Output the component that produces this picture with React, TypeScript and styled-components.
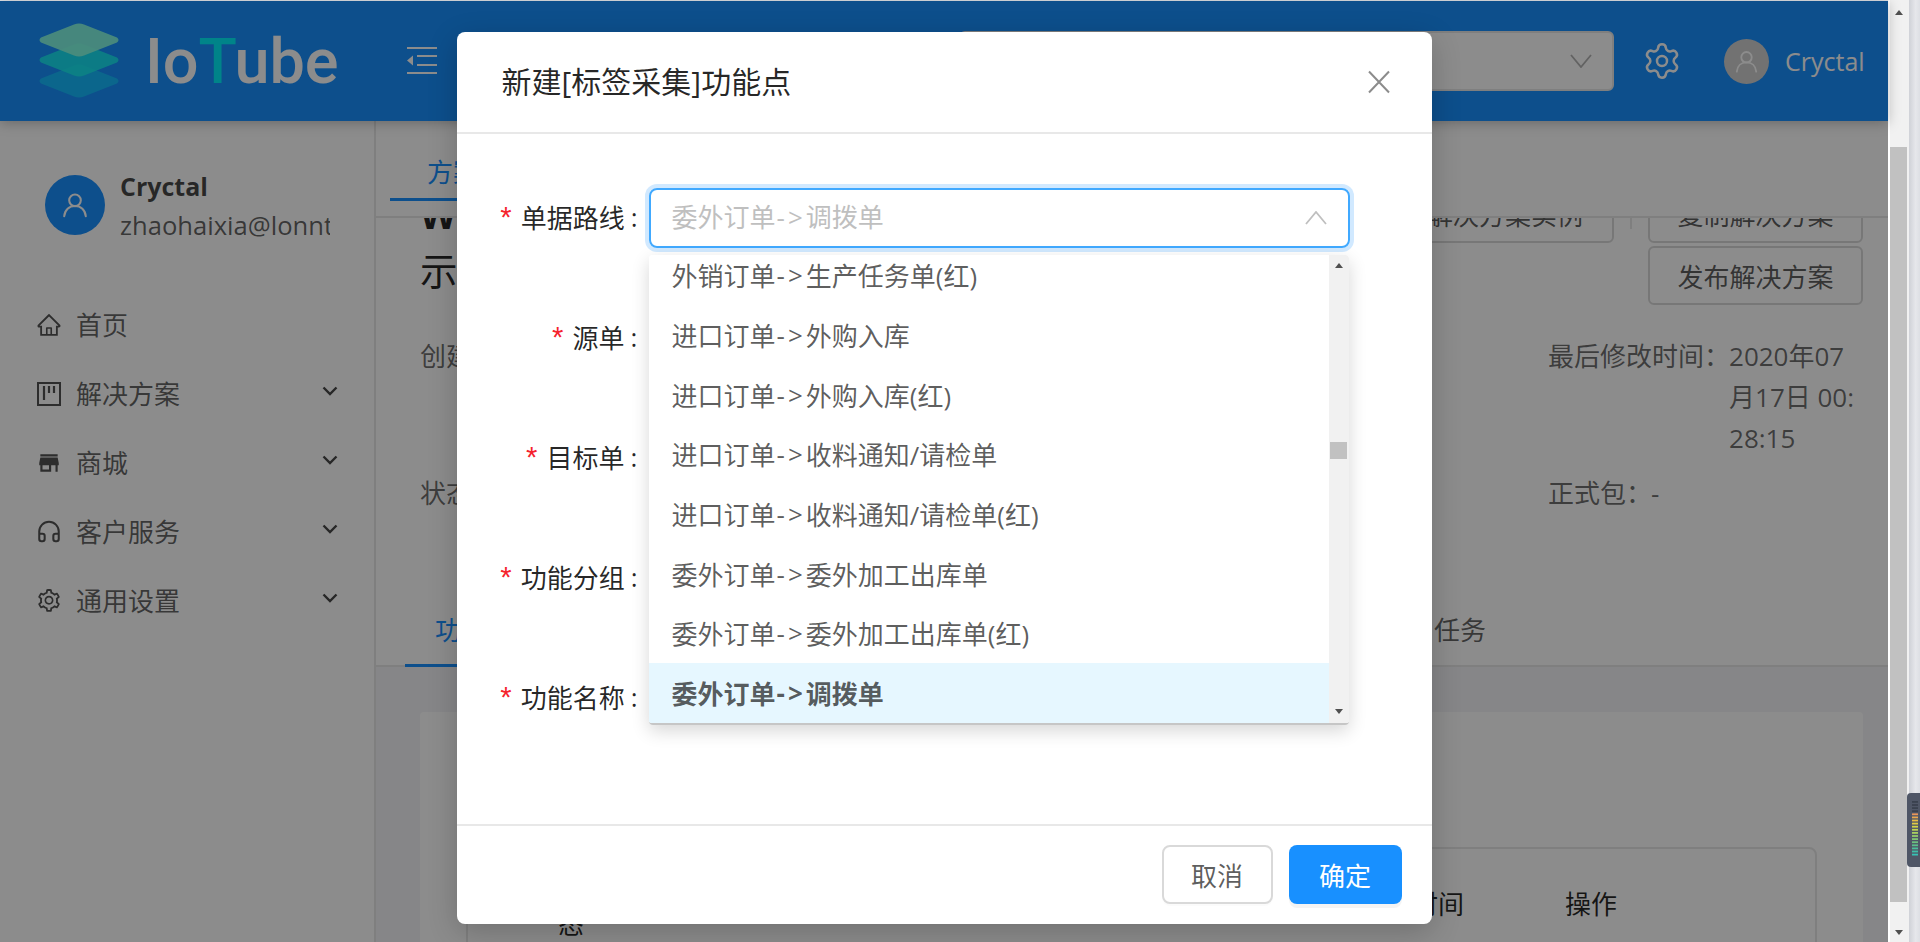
import React from 'react';
import styled, { createGlobalStyle } from 'styled-components';
import { Settings, Headphones } from 'lucide-react';
import { AiOutlineHome, AiOutlineSetting } from 'react-icons/ai';
import { MdStore } from 'react-icons/md';

const Global = createGlobalStyle`
  html, body { margin: 0; padding: 0; height: 100%; overflow: hidden; background: #fff; }
  * { box-sizing: border-box; }
  body { font-family: "Open Sans", "Noto Sans CJK SC", sans-serif; font-size: 26px; }
`;

const Screen = styled.div`
  width: 1920px; height: 942px; display: flex; overflow: hidden;
`;
const Viewport = styled.div`
  position: relative; width: 1888px; height: 942px; display: flex; flex-direction: column;
  border-top: 1px solid #dfe1e5; background: #fff;
`;
const Header = styled.header`
  position: relative; z-index: 2; height: 120px; flex: none; background: #1890ff; display: flex; align-items: center;
  padding: 0 25px 0 38px; box-shadow: 0 2px 12px rgba(0,0,0,.25); color: #fff;
`;
const LogoText = styled.div`
  font-family: Roboto, sans-serif; font-weight: 500; font-size: 63px; line-height: 1; letter-spacing: 0;
  margin-left: 25px; color: #fff;
  span { color: #00f0f9; }
`;
const FoldButton = styled.svg`
  width: 30px; height: 28px; margin-left: 68px; flex: none;
`;
const HeaderSelect = styled.div`
  margin-left: auto; width: 655px; height: 60px; background: #fff; border: 2px solid #e8e8e8; border-radius: 6px;
  display: flex; align-items: center; justify-content: flex-end; padding-right: 20px; color: #bfbfbf;
`;
const HeaderGear = styled.div`
  margin-left: 28px; display: flex; color: #fff;
`;
const HeaderAvatar = styled.div`
  width: 45px; height: 45px; border-radius: 50%; background: #d0d0d0; margin-left: 42px; display: flex;
  align-items: center; justify-content: center; color: #fff;
`;
const HeaderName = styled.div`
  margin-left: 16px; font-size: 25px; color: #fff; width: 78px; white-space: nowrap;
`;
const Body = styled.div`
  flex: 1; display: flex; min-height: 0;
`;
const Sidebar = styled.aside`
  width: 376px; flex: none; border-right: 2px solid #e8e8e8; padding-top: 54px;
`;
const Profile = styled.div`
  display: flex; gap: 15px; padding-left: 45px; height: 60px; align-items: center;
`;
const ProfileAvatar = styled.div`
  width: 60px; height: 60px; border-radius: 50%; background: #1890ff; display: flex; align-items: center; justify-content: center; flex: none;
`;
const ProfileInfo = styled.div`
  width: 210px; overflow: hidden; white-space: nowrap; color: rgba(0,0,0,.62);
`;
const ProfileName = styled.div`
  font-weight: 700; font-size: 25px; line-height: 36px; padding-top: 3px; color: rgba(0,0,0,.72);
`;
const ProfileMail = styled.div`
  font-size: 25.6px; line-height: 40px; margin-top: 2px;
`;
const Nav = styled.nav`
  margin-top: 55px;
`;
const NavItem = styled.div`
  height: 69px; display: flex; align-items: center; padding: 0 36px; color: rgba(0,0,0,.62);
`;
const NavIcon = styled.span`
  width: 26px; height: 26px; display: flex; align-items: center; justify-content: center; flex: none; color: rgba(0,0,0,.68);
`;
const NavLabel = styled.span`
  margin-left: 14px; flex: 1; line-height: 40px;
`;
const NavChevron = styled.svg`
  width: 16px; height: 10px; flex: none; margin-top: -6px; margin-right: 0;
`;
const Main = styled.main`
  flex: 1; min-width: 0; display: flex; flex-direction: column; overflow: hidden;
`;
const TopTabs = styled.div`
  height: 97px; flex: none; border-bottom: 2px solid #e8e8e8; padding-left: 14px; background: #fff; position: relative; z-index: 1;
`;
const TopTab = styled.div`
  height: 80px; width: 200px; padding-left: 37px; line-height: 102px; color: #1890ff; border-bottom: 3px solid #1890ff; white-space: nowrap;
`;
const Scroller = styled.div`
  flex: 1; min-height: 0; overflow: hidden;
`;
const ScrollInner = styled.div`
  margin-top: -58px;
`;
const Head = styled.div`
  height: 176px; padding: 24px 25px 0 44px; display: flex; justify-content: space-between;
`;
const Titles = styled.div`
  padding-top: 3px; font-size: 37.5px; line-height: 56px; color: rgba(0,0,0,.85);
  b { display: block; }
`;
const Actions = styled.div`
  width: 530px; display: flex; flex-wrap: wrap; justify-content: flex-end; align-items: flex-start; align-content: flex-start; row-gap: 3px;
`;
const GhostButton = styled.div`
  height: 59px; width: ${p => p.$w}px; border: 2px solid #d9d9d9; border-radius: 6px; display: flex; align-items: center; justify-content: center; color: rgba(0,0,0,.65); white-space: nowrap;
`;
const ActionDivider = styled.div`
  width: 2px; height: 45px; margin: 0 16px; background: #e8e8e8;
`;
const Meta = styled.div`
  padding: 0 25px 0 44px; display: grid; grid-template-columns: 1fr 315px; row-gap: 14px; line-height: 41px; color: rgba(0,0,0,.58);
`;
const MetaItem = styled.div`
  display: flex;
`;
const MetaLabel = styled.span`
  flex: none;
`;
const MetaValue = styled.span`
  margin-left: ${p => p.$gap ?? 10}px; width: 132px; word-break: break-all;
`;
const SectionTabs = styled.div`
  margin-top: 81px; height: 72px; padding-left: 29px; display: flex; border-bottom: 2px solid #e8e8e8;
`;
const SectionTab = styled.div`
  height: 72px; padding: 0 30px; line-height: 70px; white-space: nowrap;
  color: ${p => (p.$active ? '#1890ff' : 'rgba(0,0,0,.62)')};
  border-bottom: 3px solid ${p => (p.$active ? '#1890ff' : 'transparent')};
  margin-left: ${p => p.$offset ?? 0}px;
`;
const Panel = styled.div`
  background: #f5f5f7; padding: 45px 25px 0 44px; height: 400px;
`;
const Card = styled.div`
  background: #fff; border-radius: 4px; padding: 135px 46px 0; height: 400px;
`;
const TableBox = styled.div`
  border: 2px solid #e8e8e8; border-radius: 8px; height: 300px;
`;
const TableHead = styled.div`
  height: 110px; display: flex; align-items: center; padding-left: 90px; line-height: 41px; color: rgba(0,0,0,.85);
`;
const StatusCell = styled.div`
  width: 26px; word-break: break-all;
`;
const TimeCell = styled.div`
  margin-left: 750px; width: 130px; text-align: right; white-space: nowrap; padding-right: 0;
`;
const ActionCell = styled.div`
  margin-left: 101px;
`;

const Mask = styled.div`
  position: absolute; inset: 0; z-index: 5; background: rgba(0,0,0,.45); display: flex; justify-content: center; padding-top: 31px;
`;
const Modal = styled.div`
  width: 975px; height: 892px; background: #fff; border-radius: 8px; box-shadow: 0 8px 30px rgba(0,0,0,.2); display: flex; flex-direction: column;
`;
const ModalHead = styled.div`
  height: 102px; flex: none; border-bottom: 2px solid #e8e8e8; padding: 0 41px 0 45px; display: flex; align-items: center; justify-content: space-between;
`;
const ModalTitle = styled.div`
  font-size: 30px; color: rgba(0,0,0,.85); line-height: 40px;
`;
const CloseIcon = styled.svg`
  width: 24px; height: 24px; flex: none;
`;
const ModalBody = styled.div`
  position: relative; flex: 1; padding: 54px 0 0 45px; display: flex; flex-direction: column; gap: 60px;
`;
const FormRow = styled.div`
  height: 60px; display: flex; align-items: center;
`;
const FormLabel = styled.label`
  width: 136px; margin-right: 11px; flex: none; display: flex; justify-content: flex-end; align-items: center; color: rgba(0,0,0,.85); white-space: nowrap; margin-top: -2px;
`;
const Star = styled.span`
  color: #f5222d; font-family: "Liberation Mono", monospace; font-size: 29px; margin-right: 6px; line-height: 1; padding-top: 8px;
`;
const Colon = styled.span`
  margin-left: 6px; width: 7px;
`;
const SelectBox = styled.div`
  width: 701px; height: 60px; border: 2px solid #40a9ff; border-radius: 8px; box-shadow: 0 0 0 4px rgba(24,144,255,.2);
  display: flex; align-items: center; justify-content: space-between; padding: 0 21px 0 21px; color: #bfbfbf; line-height: 54px;
`;
const Placeholder = styled.span`
  margin-top: -2px;
`;
const Arrow = styled.span`
  letter-spacing: 3px; margin-left: 1px;
`;
const UpChevron = styled.svg`
  width: 22px; height: 14px; flex: none;
`;
const Dropdown = styled.div`
  position: absolute; left: 192px; top: 121px; width: 700px; height: 470px; background: #fff; display: flex;
  border-radius: 4px; overflow: hidden; border-bottom: 2px solid #c6c6c6;
`;
const DropShadow = styled.div`
  position: absolute; left: 192px; top: 121px; width: 700px; height: 470px; border-radius: 4px; box-shadow: 0 6px 18px rgba(0,0,0,.16);
`;
const Options = styled.div`
  flex: 1; min-width: 0; display: flex; flex-direction: column; justify-content: flex-end; overflow: hidden;
`;
const Option = styled.div`
  height: 59.7px; flex: none; padding-left: 23px; display: flex; align-items: center; white-space: nowrap;
  color: rgba(0,0,0,.65);
  background: ${p => (p.$selected ? '#e6f7ff' : '#fff')};
  font-weight: ${p => (p.$selected ? 700 : 400)};
`;
const InnerBar = styled.div`
  width: 20px; flex: none; background: #f1f1f1; position: relative; display: flex; flex-direction: column; align-items: center; padding-top: 8px;
`;
const ArrowUp = styled.div`
  width: 0; height: 0; border-left: 4px solid transparent; border-right: 4px solid transparent; border-bottom: 5px solid #505050; flex: none;
`;
const ArrowDown = styled.div`
  width: 0; height: 0; border-left: 4px solid transparent; border-right: 4px solid transparent; border-top: 5px solid #505050; flex: none;
`;
const InnerThumb = styled.div`
  width: 17px; height: 17px; background: #c1c1c1; margin-top: 174px; flex: none;
`;
const InnerDown = styled.div`
  margin-top: auto; padding-bottom: 9px;
`;
const ModalFoot = styled.div`
  height: 100px; flex: none; border-top: 2px solid #e8e8e8; padding: 19px 30px 0 0; display: flex; justify-content: flex-end; gap: 16px;
`;
const CancelBtn = styled.div`
  width: 111px; height: 59px; border: 2px solid #d9d9d9; border-radius: 8px; background: #fff; display: flex; align-items: center; justify-content: center; color: rgba(0,0,0,.65); box-shadow: 0 2px 0 rgba(0,0,0,.015);
`;
const OkBtn = styled.div`
  width: 113px; height: 59px; border-radius: 8px; background: #1890ff; display: flex; align-items: center; justify-content: center; color: #fff; box-shadow: 0 4px 0 rgba(0,0,0,.045);
`;

const PageBar = styled.div`
  width: 21px; height: 942px; flex: none; background: #f1f1f1; border-left: 2px solid #fff; display: flex; flex-direction: column; align-items: center; padding-top: 10px; padding-right: 2px;
`;
const PageThumb = styled.div`
  width: 17px; height: 755px; background: #c1c1c1; margin-top: 132px; flex: none;
`;
const PageDown = styled.div`
  margin-top: auto; padding-bottom: 7px;
`;
const SideStrip = styled.div`
  position: relative; flex: 1; height: 942px; background: linear-gradient(90deg, #cfd1d7, #e6e7eb 60%, #dddfe4);
`;
const Meter = styled.svg`
  position: absolute; left: -2px; top: 793px; width: 13px; height: 74px;
`;

const routes = [
  '外销订单->生产任务单(红)',
  '进口订单->外购入库',
  '进口订单->外购入库(红)',
  '进口订单->收料通知/请检单',
  '进口订单->收料通知/请检单(红)',
  '委外订单->委外加工出库单',
  '委外订单->委外加工出库单(红)',
];

const Route = ({ text }: { text: string }) => {
  const [a, b] = text.split('->');
  return <>{a}<Arrow>-&gt;</Arrow>{b}</>;
};

const UserGlyph = ({ size, color }: { size: number; color: string }) => (
  <svg width={size} height={size} viewBox="0 0 32 32" fill="none" stroke={color} strokeWidth="2.2" strokeLinecap="round">
    <circle cx="16" cy="11" r="6.2" />
    <path d="M4.5 28c.6-6.8 5.2-11 11.5-11s10.900 4.200 11.500 11" />
  </svg>
);

const Chevron = () => (
  <NavChevron viewBox="0 0 16 10" fill="none" stroke="rgba(0,0,0,.72)" strokeWidth="2.4">
    <path d="M1.500 1.500 8 8l6.500-6.500" />
  </NavChevron>
);

const meterColors = ['#3a414e','#3a414e','#3a414e','#3a414e','#e8965a','#eaa84e','#e8bc44','#e0cc44','#d2d448','#bed452','#a8d060','#94cb6a','#80c674','#6cc27f','#5cc08c','#4cc09a','#3fc0a8','#36c2b4'];

export default function App() {
  return (
    <Screen>
      <Global />
      <Viewport>
        <Header>
          <svg width="82" height="76" viewBox="0 0 82 76" style={{ flex: 'none' }}>
            <path d="M36 42.500 3 55.500q-3 2.500 0 5L36 73.500q5 2 10 0L79 60.500q3-2.500 0-5L46 42.500q-5-2-10 0Z" fill="#14c4ff" fillOpacity=".8" />
            <path d="M36 21.500 3 34.500q-3 2.500 0 5L36 52.500q5 2 10 0L79 39.500q3-2.500 0-5L46 21.500q-5-2-10 0Z" fill="#18eef0" fillOpacity=".85" />
            <path d="M36 1.500 3 14.500q-3 2.500 0 5L36 32.500q5 2 10 0L79 19.500q3-2.500 0-5L46 1.500q-5-2-10 0Z" fill="#8affe2" fillOpacity=".92" />
          </svg>
          <LogoText>Io<span>T</span>ube</LogoText>
          <FoldButton viewBox="0 0 30 28" fill="#fff">
            <rect x="0" y="0" width="30" height="2" />
            <rect x="10" y="8" width="20" height="2" />
            <rect x="10" y="17" width="20" height="2" />
            <rect x="0" y="25" width="30" height="2" />
            <path d="M6 8.500v10L0 13.500Z" />
          </FoldButton>
          <HeaderSelect>
            <svg width="22" height="14" viewBox="0 0 22 14" fill="none" stroke="rgba(0,0,0,.3)" strokeWidth="1.800"><path d="M1 1l10 12L21 1" /></svg>
          </HeaderSelect>
          <HeaderGear><Settings size={40} strokeWidth={1.5} /></HeaderGear>
          <HeaderAvatar><UserGlyph size={27} color="#fff" /></HeaderAvatar>
          <HeaderName>Cryctal</HeaderName>
        </Header>
        <Body>
          <Sidebar>
            <Profile>
              <ProfileAvatar><UserGlyph size={30} color="#fff" /></ProfileAvatar>
              <ProfileInfo>
                <ProfileName>Cryctal</ProfileName>
                <ProfileMail>zhaohaixia@lonnto.com</ProfileMail>
              </ProfileInfo>
            </Profile>
            <Nav>
              <NavItem><NavIcon><AiOutlineHome size={32} /></NavIcon><NavLabel>首页</NavLabel></NavItem>
              <NavItem>
                <NavIcon>
                  <svg width="24" height="24" viewBox="0 0 24 24" fill="none" stroke="currentColor" strokeWidth="2">
                    <rect x="1" y="1" width="22" height="22" />
                    <path d="M7 4v14M12 4v7M17 4v7" strokeWidth="2.200" />
                  </svg>
                </NavIcon>
                <NavLabel>解决方案</NavLabel><Chevron />
              </NavItem>
              <NavItem><NavIcon><MdStore size={32} /></NavIcon><NavLabel>商城</NavLabel><Chevron /></NavItem>
              <NavItem><NavIcon><Headphones size={31} strokeWidth={1.9} /></NavIcon><NavLabel>客户服务</NavLabel><Chevron /></NavItem>
              <NavItem><NavIcon><AiOutlineSetting size={31} /></NavIcon><NavLabel>通用设置</NavLabel><Chevron /></NavItem>
            </Nav>
          </Sidebar>
          <Main>
            <TopTabs><TopTab>方案详情</TopTab></TopTabs>
            <Scroller>
              <ScrollInner>
                <Head>
                  <Titles><b>WMS</b>示例解决方案</Titles>
                  <Actions>
                    <GhostButton $w={270}>创建解决方案实例</GhostButton>
                    <ActionDivider />
                    <GhostButton $w={215}>复制解决方案</GhostButton>
                    <GhostButton $w={215}>发布解决方案</GhostButton>
                  </Actions>
                </Head>
                <Meta>
                  <MetaItem><MetaLabel>创建人：</MetaLabel></MetaItem>
                  <MetaItem><MetaLabel>最后修改时间：</MetaLabel><MetaValue $gap={-1}>2020年07月17日 00:28:15</MetaValue></MetaItem>
                  <MetaItem><MetaLabel>状态：</MetaLabel></MetaItem>
                  <MetaItem><MetaLabel>正式包：</MetaLabel><MetaValue $gap={-1}>-</MetaValue></MetaItem>
                </Meta>
                <SectionTabs>
                  <SectionTab $active>功能点</SectionTab>
                  <SectionTab $offset={861}>任务</SectionTab>
                </SectionTabs>
                <Panel>
                  <Card>
                    <TableBox>
                      <TableHead>
                        <StatusCell>状态</StatusCell>
                        <TimeCell>修改时间</TimeCell>
                        <ActionCell>操作</ActionCell>
                      </TableHead>
                    </TableBox>
                  </Card>
                </Panel>
              </ScrollInner>
            </Scroller>
          </Main>
        </Body>
        <Mask>
          <Modal>
            <ModalHead>
              <ModalTitle>新建[标签采集]功能点</ModalTitle>
              <CloseIcon viewBox="0 0 24 24" fill="none" stroke="#8c8c8c" strokeWidth="2"><path d="M2 1.500 22 22.500M22 1.500 2 22.500" /></CloseIcon>
            </ModalHead>
            <ModalBody>
              <FormRow>
                <FormLabel><Star>*</Star>单据路线<Colon>:</Colon></FormLabel>
                <SelectBox>
                  <Placeholder><Route text="委外订单->调拨单" /></Placeholder>
                  <UpChevron viewBox="0 0 22 14" fill="none" stroke="#bfbfbf" strokeWidth="1.800"><path d="M1 13 11 1l10 12" /></UpChevron>
                </SelectBox>
              </FormRow>
              <FormRow><FormLabel><Star>*</Star>源单<Colon>:</Colon></FormLabel></FormRow>
              <FormRow><FormLabel><Star>*</Star>目标单<Colon>:</Colon></FormLabel></FormRow>
              <FormRow><FormLabel><Star>*</Star>功能分组<Colon>:</Colon></FormLabel></FormRow>
              <FormRow><FormLabel><Star>*</Star>功能名称<Colon>:</Colon></FormLabel></FormRow>
              <DropShadow />
              <Dropdown>
                <Options>
                  {routes.map(r => <Option key={r}><Route text={r} /></Option>)}
                  <Option $selected><Route text="委外订单->调拨单" /></Option>
                </Options>
                <InnerBar>
                  <ArrowUp />
                  <InnerThumb />
                  <InnerDown><ArrowDown /></InnerDown>
                </InnerBar>
              </Dropdown>
            </ModalBody>
            <ModalFoot>
              <CancelBtn>取消</CancelBtn>
              <OkBtn>确定</OkBtn>
            </ModalFoot>
          </Modal>
        </Mask>
      </Viewport>
      <PageBar>
        <ArrowUp />
        <PageThumb />
        <PageDown><ArrowDown /></PageDown>
      </PageBar>
      <SideStrip>
        <Meter viewBox="0 0 13 74">
          <path d="M4 0h9v74H4a4 4 0 0 1-4-4V4a4 4 0 0 1 4-4Z" fill="#4f5666" />
          {meterColors.map((c, i) => <rect key={i} x="5" y={8 + i * 3.1} width="6" height="1.800" fill={c} />)}
        </Meter>
      </SideStrip>
    </Screen>
  );
}
